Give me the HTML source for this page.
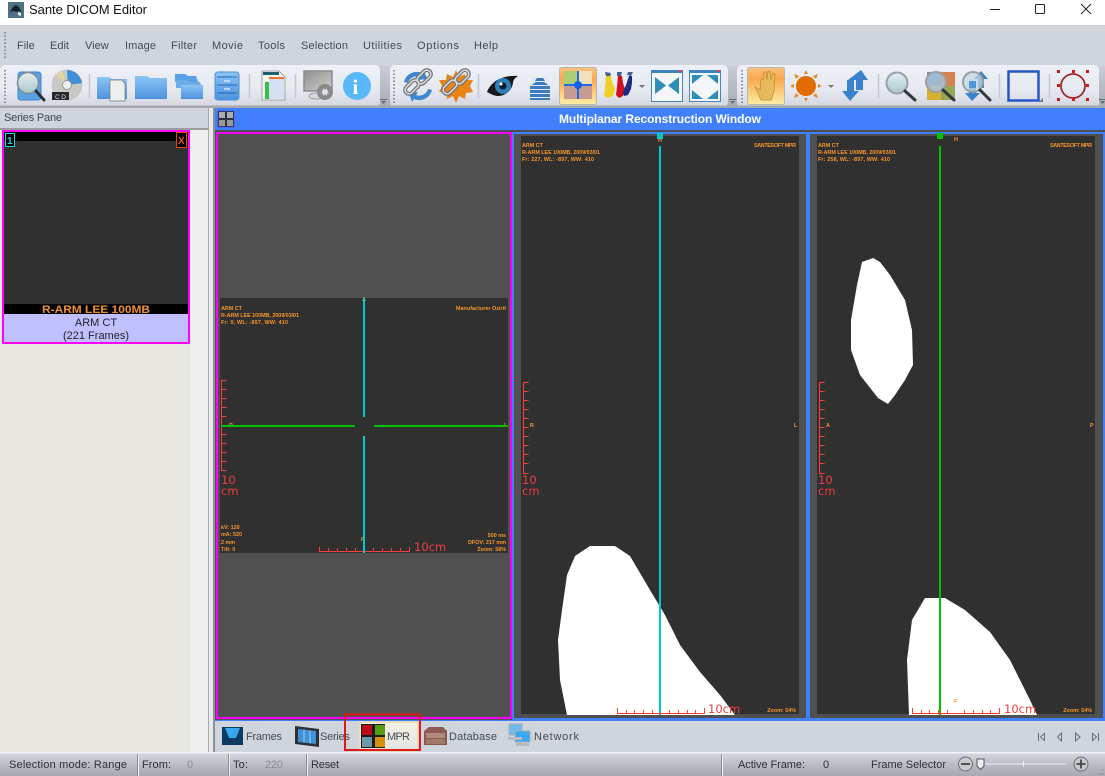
<!DOCTYPE html>
<html><head><meta charset="utf-8"><title>Sante DICOM Editor</title>
<style>
html,body{margin:0;padding:0;width:1105px;height:776px;overflow:hidden;background:#d0d4dd}
svg{display:block;position:absolute;left:0;top:0}
text{font-family:"Liberation Sans",sans-serif}
.m{font-size:11px;fill:#444b55}
.s{font-size:11px;fill:#2e3238}
.o{font-size:5.4px;fill:#f8942a;font-weight:bold}
.r{font-size:11.5px;fill:#f03c40;font-family:"DejaVu Sans",sans-serif}
</style></head><body>
<svg width="1105" height="776" viewBox="0 0 1105 776" xmlns="http://www.w3.org/2000/svg">
<defs>
<linearGradient id="tb" x1="0" y1="0" x2="0" y2="1"><stop offset="0" stop-color="#eef0f7"/><stop offset=".6" stop-color="#e6e9f1"/><stop offset="1" stop-color="#d3d6de"/></linearGradient>
<linearGradient id="gap" x1="0" y1="0" x2="0" y2="1"><stop offset="0" stop-color="#c9ccd3"/><stop offset="1" stop-color="#a8acb4"/></linearGradient>
<linearGradient id="sel" x1="0" y1="0" x2="0" y2="1"><stop offset="0" stop-color="#fbc080"/><stop offset=".3" stop-color="#fba84c"/><stop offset="1" stop-color="#fdeda8"/></linearGradient>
<linearGradient id="fold" x1="0" y1="0" x2="0" y2="1"><stop offset="0" stop-color="#8cc4f4"/><stop offset="1" stop-color="#4d93de"/></linearGradient>
<linearGradient id="st" x1="0" y1="0" x2="0" y2="1"><stop offset="0" stop-color="#d4d7dd"/><stop offset=".5" stop-color="#b9bcc3"/><stop offset="1" stop-color="#a6a9b0"/></linearGradient>
<linearGradient id="gl" x1="0" y1="0" x2="0" y2="1"><stop offset="0" stop-color="#e4eeef"/><stop offset="1" stop-color="#a8c8ce"/></linearGradient>
<linearGradient id="tab" x1="0" y1="0" x2="0" y2="1"><stop offset="0" stop-color="#f4f1e2"/><stop offset="1" stop-color="#e2e3e4"/></linearGradient>
<linearGradient id="mon" x1="0" y1="0" x2="1" y2="1"><stop offset="0" stop-color="#8e8e8e"/><stop offset="1" stop-color="#cfcfcf"/></linearGradient>
</defs>

<!-- title bar -->
<rect width="1105" height="25" fill="#fff"/>
<rect x="8" y="2" width="16" height="16" fill="#4f7186"/>
<path d="M10 12l3-5 3-2 3 2 3 6-3-2-2 1-3-1z" fill="#15202a"/><path d="M18 12l3 1 0 3-3-1z" fill="#eef"/>
<text x="29" y="14" font-size="13" fill="#111" textLength="118" lengthAdjust="spacing">Sante DICOM Editor</text>
<rect x="990" y="9" width="10" height="1" fill="#222"/>
<rect x="1035.500" y="4.500" width="9" height="9" rx="1" fill="none" stroke="#222"/>
<path d="M1081 4l10 10M1091 4l-10 10" stroke="#222" fill="none"/>

<!-- menu -->
<rect y="25" width="1105" height="83" fill="#d0d4dd"/>
<path d="M5 32v26" stroke="#8d9096" stroke-width="2" stroke-dasharray="1.500 2"/>
<text class="m" x="17" y="49">File</text>
<text class="m" x="50" y="49">Edit</text>
<text class="m" x="85" y="49">View</text>
<text class="m" x="125" y="49" textLength="31">Image</text>
<text class="m" x="171" y="49" textLength="26">Filter</text>
<text class="m" x="212" y="49" textLength="31">Movie</text>
<text class="m" x="258" y="49" textLength="27">Tools</text>
<text class="m" x="301" y="49" textLength="47">Selection</text>
<text class="m" x="363" y="49" textLength="39">Utilities</text>
<text class="m" x="417" y="49" textLength="42">Options</text>
<text class="m" x="474" y="49" textLength="24">Help</text>

<!-- toolbars -->
<rect x="379" y="66" width="12" height="40" fill="url(#gap)"/>
<rect x="727" y="66" width="11" height="40" fill="url(#gap)"/>
<rect x="0" y="65" width="380" height="42" rx="5" fill="url(#tb)"/>
<rect x="390" y="65" width="338" height="42" rx="5" fill="url(#tb)"/>
<rect x="737" y="65" width="362" height="42" rx="5" fill="url(#tb)"/>
<rect x="0" y="105.500" width="1105" height="2.500" fill="#a4a7ae"/>
<rect x="1099" y="66" width="6" height="40" fill="url(#gap)"/>
<g stroke="#8f9298" stroke-width="2" stroke-dasharray="1.500 2"><path d="M5 70v33M394 70v33M742 70v33"/></g>
<g fill="#6b6e74"><path d="M380 99h7v1h-7zM381 101h5l-2.500 3z"/><path d="M729 99h7v1h-7zM730 101h5l-2.500 3z"/><path d="M1099 99h6v1h-6zM1100 101h5l-2.500 3z"/></g>
<g stroke="#c4c7cd" stroke-width="1.500"><path d="M89.500 74v24M249.500 74v24M295.500 74v24M478.500 74v24M878.500 74v24M999.500 74v24M1049.500 74v24"/></g>

<!-- cabinet+magnifier -->
<rect x="18" y="72" width="23" height="28" rx="3" fill="#5aa2e6" stroke="#3f84cc"/>
<circle cx="28" cy="83" r="10.500" fill="url(#gl)" stroke="#7e8a90" stroke-width="1.500"/>
<path d="M36 91l8 9" stroke="#2e3236" stroke-width="3" stroke-linecap="round"/>
<!-- CD -->
<circle cx="67" cy="85" r="15.500" fill="#c8c9c4"/><path d="M67 70a15.500 15.500 0 0 1 15 13l-14 2z" fill="#3f8fd6"/><path d="M56 75a15 15 0 0 1 6-4l4 13z" fill="#e4d5a0"/><circle cx="67" cy="85" r="4.500" fill="#eef0f1" stroke="#999"/>
<rect x="52" y="92" width="17" height="8" fill="#25282c"/><text x="55" y="99" font-size="6.500" fill="#ddd" textLength="11">CD</text>
<!-- folder doc -->
<path d="M97 77h12l3 2h15v20H97z" fill="url(#fold)"/><path d="M110 80h12l3 4v17h-15z" fill="#eef0f0" stroke="#777" stroke-width=".7"/>
<!-- folder -->
<path d="M135 76h12l3 2h17v21h-32z" fill="url(#fold)"/>
<!-- folders -->
<path d="M175 74h10l3 2h8l2 6h-23z" fill="#5aa0e8"/><path d="M176 80h12l2 2h10l2 6h-26z" fill="#6aaeea"/><path d="M181 85h22v14h-22z" fill="url(#fold)"/>
<!-- cabinet -->
<rect x="215" y="72" width="24" height="28" rx="3" fill="url(#fold)" stroke="#4a8fd8"/>
<path d="M217 77h20M217 85h20M217 93h20" stroke="#1e66b4"/><path d="M224 81h6M224 89h6" stroke="#d5e6f7" stroke-width="1.500"/>
<!-- table doc -->
<path d="M262 71h17l6 6v23h-23z" fill="#f3f4f2" stroke="#8d8f8d" stroke-width=".8"/><rect x="263" y="72" width="16" height="3" fill="#1e5f6c"/><rect x="269" y="79" width="15" height="20" fill="#d6e0f4"/><rect x="265" y="82" width="4" height="17" fill="#33c14a"/><rect x="269" y="77" width="15" height="2" fill="#ee7030"/>
<!-- monitor -->
<rect x="304" y="71" width="28" height="20" fill="url(#mon)" stroke="#8c8c8c" stroke-width="1.500"/><ellipse cx="316" cy="96" rx="7" ry="3" fill="#d8d9dc" stroke="#a0a0a0"/><circle cx="325" cy="92" r="6" fill="none" stroke="#8a8a8a" stroke-width="4"/>
<path d="M325 84v16M317 92h16M319.500 86.500l11 11M330.500 86.500l-11 11" stroke="#8a8a8a" stroke-width="2"/><circle cx="325" cy="92" r="3" fill="#dfe1e6"/>
<!-- info -->
<circle cx="357" cy="86" r="14" fill="#59b8f8"/><text x="352.500" y="94" font-size="21" font-weight="bold" fill="#fff" style="font-family:'Liberation Serif',serif">i</text>

<!-- chains -->
<path d="M404 82a13 13 0 0 1 18-9l2-3 3 9-9 1 2-3a9 9 0 0 0-12 6zM432 90a13 13 0 0 1-18 9l-2 3-3-9 9-1-2 3a9 9 0 0 0 12-6z" fill="#3f87d2"/>
<g fill="none" stroke="#74787c" stroke-width="4"><rect x="404" y="83" width="16" height="8" rx="4" transform="rotate(-45 412 87)"/><rect x="416" y="73" width="16" height="8" rx="4" transform="rotate(-45 424 77)"/></g>
<g fill="none" stroke="#dcdcdc" stroke-width="1.500"><rect x="404" y="83" width="16" height="8" rx="4" transform="rotate(-45 412 87)"/><rect x="416" y="73" width="16" height="8" rx="4" transform="rotate(-45 424 77)"/></g>
<path d="M456 70l3 7 6-3 1 6 7 0-3 6 3 6-7 1-1 6-6-3-3 7-3-7-6 3-1-6-7-1 3-6-3-6 7 0 1-6 6 3z" fill="#e98412"/>
<g fill="none" stroke="#74787c" stroke-width="4"><rect x="442" y="83" width="16" height="8" rx="4" transform="rotate(-45 450 87)"/><rect x="454" y="73" width="16" height="8" rx="4" transform="rotate(-45 462 77)"/></g>
<g fill="none" stroke="#dcdcdc" stroke-width="1.500"><rect x="442" y="83" width="16" height="8" rx="4" transform="rotate(-45 450 87)"/><rect x="454" y="73" width="16" height="8" rx="4" transform="rotate(-45 462 77)"/></g>
<!-- eye -->
<path d="M487 92c4-10 14-17 31-16-3 2-4 3-5 6 0 6-6 14-15 14-4 0-7-2-11-4z" fill="#16181b"/><circle cx="503" cy="86" r="8" fill="#2f7fb8"/><circle cx="503" cy="86" r="3.500" fill="#0c1c2a"/><circle cx="501" cy="84" r="1.500" fill="#fff"/>
<!-- person lines -->
<path d="M535 82a5 5 0 1 1 10 0h-1l6 4v14h-20V86l6-4z" fill="#3b7cbe"/><path d="M530 77.500h20M530 81.500h20M530 85.500h20M530 89.500h20M530 93.500h20M530 97.500h20" stroke="#e6e9f1"/>
<!-- MPR selected -->
<rect x="559.500" y="67.500" width="37" height="37" rx="2" fill="url(#sel)" stroke="#b9b8ac"/>
<rect x="564" y="71" width="14" height="14" fill="#a9cf72"/><rect x="578" y="71" width="14" height="14" fill="#f3dfba"/><rect x="564" y="85" width="28" height="14" fill="#c79a92"/>
<path d="M578 71v28M564 85h28" stroke="#1a6fe0" stroke-width="2"/><circle cx="578" cy="85" r="4" fill="#1060f0"/>
<!-- paint -->
<path d="M605 72l6 1-1 4-4-1zM617 72l5 0-1 4-4 0zM628 72l5 0-2 4-4-1z" fill="#48608c"/>
<path d="M606 76h5l1 6 3 7-2 7-5 2-4-2 1-8z" fill="#f0d020"/><path d="M618 76h4l1 7 2 6-2 7-4 2-3-3 1-8z" fill="#d01020"/><path d="M629 76h3l0 7-1 6-3 6-4 1-1-4 3-7z" fill="#1c2a88"/>
<path d="M639 85h6l-3 3z" fill="#777"/>
<!-- boxes -->
<rect x="651.500" y="70.500" width="31" height="31" fill="#f4f6fa" stroke="#4a88b4"/><rect x="651" y="70" width="32" height="3" fill="#3b86c0"/><rect x="679" y="70" width="3" height="2" fill="#e24060"/>
<path d="M655 77l11 8.500-11 8.500zM679 77l-11 8.500 11 8.500z" fill="#2e8fb8"/>
<rect x="689.500" y="70.500" width="31" height="31" fill="#f4f6fa" stroke="#4a88b4"/><rect x="689" y="70" width="32" height="3" fill="#3b86c0"/><rect x="717" y="70" width="3" height="2" fill="#e24060"/>
<path d="M692 75h11l-11 9zM718 75h-11l11 9zM692 99h11l-11-9zM718 99h-11l11-9z" fill="#2e8fb8"/>
<!-- hand selected -->
<rect x="747.500" y="67.500" width="37" height="37" rx="2" fill="url(#sel)" stroke="#b9b8ac"/>
<path d="M755 87l5 3 1-10 1-1 1 1 1-8 2 0 1 8 1-9 2 0 1 9 2-7 2 1-1 17-3 9h-10z" fill="#e9b95e" stroke="#b98a30" stroke-width=".7"/>
<!-- sun -->
<circle cx="806" cy="86" r="10" fill="#e06c00"/>
<path d="M806 70l-2 4h4zM806 102l-2-4h4zM790 86l4-2v4zM822 86l-4-2v4zM794 74l5 2-3 3zM818 74l-5 2 3 3zM794 98l5-2-3-3zM818 98l-5-2 3-3z" fill="#e88a20"/>
<path d="M828 85h6l-3 3z" fill="#777"/>
<!-- arrows -->
<path d="M861 70l-13 10h8v10h7V80h5z" fill="#3b82cc"/><path d="M850 101l-8-10h5V80h7v11h5z" fill="#3b82cc"/>
<!-- magnifiers -->
<circle cx="897" cy="83" r="10.500" fill="url(#gl)" stroke="#9a9fa2" stroke-width="2"/><path d="M905 91l10 9" stroke="#33373b" stroke-width="3" stroke-linecap="round"/>
<rect x="927" y="72" width="14" height="14" fill="#7f8ea0"/><rect x="941" y="72" width="14" height="14" fill="#d88050"/><rect x="927" y="86" width="14" height="14" fill="#d8b030"/><rect x="941" y="86" width="14" height="14" fill="#90a858"/>
<circle cx="936" cy="82" r="10" fill="#a9c6e0" fill-opacity=".8" stroke="#9a9fa2" stroke-width="2"/><path d="M943 90l11 10" stroke="#33373b" stroke-width="3" stroke-linecap="round"/>
<path d="M981 71l-7 8h4v9h6v-9h4z" fill="#3b82cc"/><path d="M972 101l-7-8h4v-8h7v8h4z" fill="#3b82cc"/>
<circle cx="973" cy="82" r="10" fill="#c2d8e4" fill-opacity=".75" stroke="#9a9fa2" stroke-width="2"/><rect x="969" y="81" width="7" height="7" fill="#4f98d8"/><path d="M980 90l10 10" stroke="#33373b" stroke-width="3" stroke-linecap="round"/>
<!-- rectangle -->
<rect x="1008.500" y="71.500" width="30" height="29" fill="none" stroke="#2456c8" stroke-width="2.500"/><path d="M1043 98v4h-4z" fill="#777"/>
<!-- circle -->
<circle cx="1073" cy="86" r="12" fill="none" stroke="#a02a2a" stroke-width="1.800"/>
<g fill="#d01818"><rect x="1057" y="70" width="3" height="3"/><rect x="1072" y="70" width="3" height="3"/><rect x="1086" y="70" width="3" height="3"/><rect x="1057" y="84" width="3" height="3"/><rect x="1086" y="84" width="3" height="3"/><rect x="1057" y="98" width="3" height="3"/><rect x="1072" y="98" width="3" height="3"/><rect x="1086" y="98" width="3" height="3"/></g>

<!-- series pane -->
<rect x="0" y="108" width="215" height="645" fill="#f1f1f1"/>
<rect x="0" y="108" width="208" height="20" fill="#d0d4dd"/>
<text x="4" y="121" font-size="11" fill="#40454c" textLength="58">Series Pane</text>
<rect x="0" y="128" width="208" height="2" fill="#9c9ea2"/>
<rect x="0" y="130" width="190" height="622" fill="#e8e8e0"/>
<rect x="190" y="130" width="18" height="622" fill="#f0f0f0"/>
<rect x="208" y="108" width="1" height="644" fill="#a8aaae"/>
<rect x="209" y="108" width="4" height="644" fill="#e8e9ec"/>
<rect x="213" y="108" width="2" height="644" fill="#8d9095"/>
<rect x="2" y="130" width="188" height="214" fill="#ff00ff"/>
<rect x="4" y="132" width="184" height="183" fill="#000"/>
<rect x="4" y="141" width="184" height="163" fill="#303030"/>
<rect x="5.500" y="133.500" width="9" height="13" fill="#000" stroke="#10e0e0"/>
<text x="7" y="144" font-size="10" font-weight="bold" fill="#10e0e0">1</text>
<rect x="176.500" y="132.500" width="10" height="15" fill="#000" stroke="#e04800"/>
<text x="178" y="144" font-size="10" font-weight="bold" fill="#e85a10">X</text>
<text x="42" y="313" font-size="11" font-weight="bold" fill="#f09030" textLength="108" lengthAdjust="spacingAndGlyphs">R-ARM LEE 100MB</text>
<rect x="4" y="314" width="184" height="28" fill="#c0bfff"/>
<text x="96" y="326" font-size="11" fill="#22242c" text-anchor="middle">ARM CT</text>
<text x="96" y="339" font-size="11" fill="#22242c" text-anchor="middle">(221 Frames)</text>

<!-- MPR header -->
<rect x="215" y="108" width="890" height="22" fill="#4080ff"/>
<rect x="215" y="130" width="890" height="2" fill="#4c4f58"/>
<rect x="218" y="111" width="16" height="16" fill="#2c2f48" stroke="#4a4ad0" stroke-width=".6"/>
<rect x="219" y="112" width="6" height="6" fill="#aaa"/><rect x="227" y="112" width="6" height="6" fill="#aaa"/><rect x="219" y="120" width="6" height="6" fill="#999"/><rect x="227" y="120" width="6" height="6" fill="#999"/>
<text x="660" y="123" font-size="12" font-weight="bold" fill="#fff" text-anchor="middle" textLength="202">Multiplanar Reconstruction Window</text>

<!-- viewport backgrounds -->
<rect x="215" y="132" width="890" height="588" fill="#505050"/>
<rect x="512" y="132" width="298" height="588" fill="#4080ff"/>
<rect x="514" y="134" width="292" height="584" fill="#505050"/>
<rect x="810" y="132" width="295" height="588" fill="#4080ff"/>
<rect x="810" y="134" width="293" height="584" fill="#505050"/>
<rect x="216" y="132" width="296" height="587" fill="#ff00ff"/>
<rect x="218" y="134" width="292" height="583" fill="#505050"/>

<!-- left image -->
<rect x="220" y="298" width="288" height="255" fill="#303030"/>
<text class="o" x="221" y="310">ARM CT</text>
<text class="o" x="221" y="317" textLength="78">R-ARM LEE 100MB, 2009/03/01</text>
<text class="o" x="221" y="324" textLength="67">Fr: 0, WL: -897, WW: 410</text>
<text class="o" x="506" y="310" text-anchor="end" textLength="50">Manufacturer Ozirit</text>
<text class="o" x="221" y="529">kV: 120</text><text class="o" x="221" y="536">mA: 520</text><text class="o" x="221" y="544">2 mm</text><text class="o" x="221" y="551">Tilt: 0</text>
<text class="o" x="506" y="537" text-anchor="end">500 ms</text><text class="o" x="506" y="544" text-anchor="end">DFOV: 217 mm</text><text class="o" x="506" y="551" text-anchor="end">Zoom: 58%</text>
<text class="o" x="229" y="427">R</text><text class="o" x="504" y="427">L</text><text class="o" x="362" y="301">A</text><text class="o" x="361" y="541">P</text>
<g fill="none" stroke="#ff3c3c"><path d="M221.500 380v91M221.500 380.500h5M221.500 389.500h5M221.500 398.500h5M221.500 407.500h5M221.500 416.500h5M221.500 425.500h5M221.500 434.500h5M221.500 443.500h5M221.500 452.500h5M221.500 461.500h5M221.500 470.500h5"/>
<path d="M320 551.500h90M319.500 547v5M328.500 548v4M337.500 548v4M346.500 548v4M355.500 548v4M364.500 548v4M373.500 548v4M382.500 548v4M391.500 548v4M400.500 548v4M409.500 547v5"/></g>
<text class="r" x="221" y="484">10</text><text class="r" x="221" y="495">cm</text><text class="r" x="414" y="551">10cm</text>
<rect x="221" y="425" width="134" height="2" fill="#00c000"/><rect x="374" y="425" width="134" height="2" fill="#00c000"/>
<rect x="363" y="298" width="2" height="119" fill="#00c8d0"/><rect x="363" y="436" width="2" height="117" fill="#00c8d0"/>

<!-- middle image -->
<rect x="521" y="136" width="278" height="578" fill="#303030"/>
<path d="M567 715L560 680L558 640L562 610L567 575L575 556L590 546L615 546L630 556L650 590L665 615L680 645L700 672L720 695L735 715z" fill="#fff"/>
<text class="o" x="522" y="147">ARM CT</text>
<text class="o" x="522" y="154" textLength="78">R-ARM LEE 100MB, 2009/03/01</text>
<text class="o" x="522" y="161" textLength="72">Fr: 227, WL: -897, WW: 410</text>
<text class="o" x="796" y="147" text-anchor="end" textLength="42">SANTESOFT MPR</text>
<text class="o" x="530" y="427">R</text><text class="o" x="794" y="427">L</text><text class="o" x="658" y="142">H</text>
<text class="o" x="796" y="712" text-anchor="end">Zoom: 54%</text>
<rect x="657" y="133" width="6" height="6" fill="#00c8d0"/>
<rect x="659" y="146" width="2" height="569" fill="#00c8d0"/>
<g fill="none" stroke="#ff3c3c"><path d="M523.500 382v92M523.500 382.500h5M523.500 391.500h5M523.500 400.500h5M523.500 409.500h5M523.500 418.500h5M523.500 427.500h5M523.500 436.500h5M523.500 445.500h5M523.500 454.500h5M523.500 463.500h5M523.500 473.500h5"/>
<path d="M617 713.500h88M617.500 708v6M626.500 710v4M634.500 710v4M643.500 710v4M652.500 710v4M669.500 710v4M678.500 710v4M687.500 710v4M695.500 710v4M704.500 708v6"/></g>
<text class="r" x="522" y="484">10</text><text class="r" x="522" y="495">cm</text><text class="r" x="708" y="713">10cm</text>

<!-- right image -->
<rect x="817" y="136" width="278" height="578" fill="#303030"/>
<path d="M873 258L862 262L857 285L851 320L851 350L860 375L878 398L888 404L895 395L905 380L913 365L912 330L905 300L890 275L880 262z" fill="#fff"/>
<path d="M909 715L907 660L912 620L925 598L945 598L965 610L990 632L1010 660L1030 700L1037 715z" fill="#fff"/>
<text class="o" x="818" y="147">ARM CT</text>
<text class="o" x="818" y="154" textLength="78">R-ARM LEE 100MB, 2009/03/01</text>
<text class="o" x="818" y="161" textLength="72">Fr: 258, WL: -897, WW: 410</text>
<text class="o" x="1092" y="147" text-anchor="end" textLength="42">SANTESOFT MPR</text>
<text class="o" x="826" y="427">A</text><text class="o" x="1090" y="427">P</text><text class="o" x="954" y="141">H</text><text class="o" x="954" y="703">F</text>
<text class="o" x="1092" y="712" text-anchor="end">Zoom: 54%</text>
<rect x="937" y="133" width="6" height="6" fill="#00c800"/>
<rect x="939" y="146" width="2" height="569" fill="#00c000"/>
<g fill="none" stroke="#ff3c3c"><path d="M819.500 382v92M819.500 382.500h5M819.500 391.500h5M819.500 400.500h5M819.500 409.500h5M819.500 418.500h5M819.500 427.500h5M819.500 436.500h5M819.500 445.500h5M819.500 454.500h5M819.500 463.500h5M819.500 473.500h5"/>
<path d="M912 713.500h88M912.500 708v6M921.500 710v4M929.500 710v4M938.500 710v4M947.500 710v4M964.500 710v4M973.500 710v4M982.500 710v4M990.500 710v4M999.500 708v6"/></g>
<text class="r" x="818" y="484">10</text><text class="r" x="818" y="495">cm</text><text class="r" x="1004" y="713">10cm</text>

<!-- bottom tabs -->
<rect x="215" y="720" width="890" height="1" fill="#4080ff"/>
<rect x="215" y="721" width="890" height="31" fill="#d0d4dd"/>
<rect x="213" y="719" width="2" height="33" fill="#8d9095"/>
<rect x="222" y="727" width="21" height="18" fill="#0d3a60"/><path d="M225 728h15l-4 10h-7z" fill="#37a8ee"/>
<text class="m" x="246" y="740" textLength="36">Frames</text>
<path d="M295 726l24 3v18l-24-3z" fill="#2c3034"/><path d="M298 729l18 2v13l-18-2z" fill="#3f92d6"/><path d="M304 729.500v13M310 730.500v13" stroke="#9cd0f4"/>
<text class="m" x="320" y="740" textLength="30">Series</text>
<rect x="359.500" y="722" width="58" height="29" rx="2" fill="url(#tab)" stroke="#f4dc90"/>
<rect x="361" y="724" width="24" height="24" fill="#1a1c1e"/>
<rect x="362" y="725" width="10" height="10" fill="#c00c18"/><rect x="375" y="725" width="10" height="10" fill="#5a9c10"/><rect x="362" y="737" width="10" height="10" fill="#6c98ac"/><rect x="375" y="737" width="10" height="10" fill="#d89008"/>
<text class="m" x="387" y="740" textLength="23">MPR</text>
<rect x="345" y="714.500" width="75" height="35.500" fill="none" stroke="#e01818" stroke-width="2"/>
<path d="M424 731l5-4h14l4 4v14h-23z" fill="#8d5a50"/><rect x="426" y="733" width="19" height="5" fill="#b08a7a"/><rect x="426" y="739" width="19" height="5" fill="#a07a6a"/>
<text class="m" x="449" y="740" textLength="48">Database</text>
<rect x="509" y="724" width="13" height="11" fill="#6cbcf0" stroke="#a8acb0"/><rect x="515" y="731" width="15" height="11" fill="#38a8f4" stroke="#a8acb0"/><path d="M508 737h14v3h-14zM516 743h13v3h-13z" fill="#b8bcc0"/>
<text class="m" x="534" y="740" textLength="45">Network</text>
<g fill="none" stroke="#6a6d74"><path d="M1038.500 733v8M1044.500 733.500l-4 3.500 4 3.500zM1061.500 733v8l-4-4zM1075.500 733v8l4.500-4zM1092.500 733.500l4 3.500-4 3.500zM1098.500 733v8"/></g>

<!-- status bar -->
<rect y="752" width="1105" height="1.500" fill="#f2f3f5"/>
<rect y="753.500" width="1105" height="22.500" fill="url(#st)"/>
<path d="M138.500 754v22M229.500 754v22M307.500 754v22M722.500 754v22" stroke="#eceef0"/>
<path d="M137.500 754v22M228.500 754v22M306.500 754v22M721.500 754v22" stroke="#8c8f95"/>
<text class="s" x="9" y="768" textLength="118">Selection mode: Range</text>
<text class="s" x="142" y="768" textLength="29">From:</text>
<text class="s" x="187" y="768" style="fill:#8a8d92">0</text>
<text class="s" x="233" y="768" textLength="15">To:</text>
<text class="s" x="265" y="768" style="fill:#8a8d92" textLength="18">220</text>
<text class="s" x="311" y="768" textLength="28">Reset</text>
<text class="s" x="738" y="768" textLength="67">Active Frame:</text>
<text class="s" x="823" y="768">0</text>
<text class="s" x="871" y="768" textLength="75">Frame Selector</text>
<circle cx="965.500" cy="764" r="7" fill="#c8cace" stroke="#6a6d72"/><path d="M961 764h9" stroke="#444" stroke-width="1.800"/>
<circle cx="1081" cy="764" r="7" fill="#c8cace" stroke="#6a6d72"/><path d="M1076.500 764h9M1081 759.500v9" stroke="#444" stroke-width="1.800"/>
<path d="M985 764h81M1023.500 761v6" stroke="#eef0f2"/>
<path d="M977 759h7v7l-3.500 3.500-3.500-3.500z" fill="#eef0f2" stroke="#55585e"/>
<g fill="#8d9096"><rect x="1102" y="769" width="1.500" height="1.500"/><rect x="1099" y="773" width="1.500" height="1.500"/><rect x="1102" y="773" width="1.500" height="1.500"/></g>
</svg>
</body></html>
